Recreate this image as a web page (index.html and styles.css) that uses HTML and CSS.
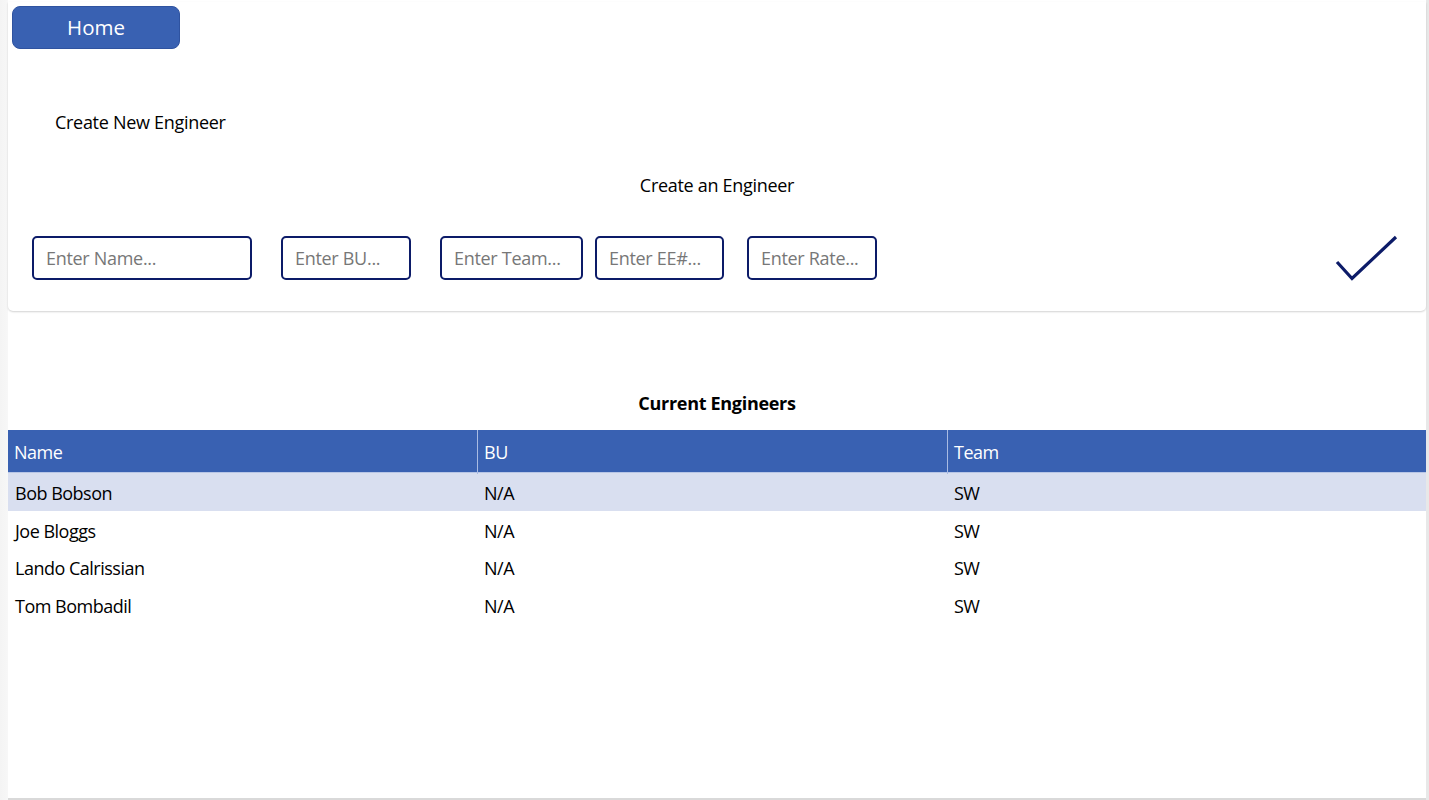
FILE: index.html
```html
<!DOCTYPE html>
<html>
<head>
<meta charset="utf-8">
<link rel="stylesheet" href="styles.css">
</head>
<body>
<div class="canvas">
  <section class="form-card">
    <button class="home-btn">Home</button>
    <div class="page-title">Create New Engineer</div>
    <div class="form-title">Create an Engineer</div>
    <div class="inputs">
      <div class="field f-name">Enter Name...</div>
      <div class="field f-bu">Enter BU...</div>
      <div class="field f-team">Enter Team...</div>
      <div class="field f-ee">Enter EE#...</div>
      <div class="field f-rate">Enter Rate...</div>
      <svg class="check" width="64" height="50" viewBox="0 0 64 50">
        <path d="M2 29 L17 45.5 L61 4" fill="none" stroke="#0c1b68" stroke-width="3.2"/>
      </svg>
    </div>
  </section>
  <div class="list-title">Current Engineers</div>
  <div class="table">
    <div class="thead">
      <div class="th">Name</div>
      <div class="th">BU</div>
      <div class="th">Team</div>
    </div>
    <div class="row selected"><div>Bob Bobson</div><div>N/A</div><div>SW</div></div>
    <div class="row"><div>Joe Bloggs</div><div>N/A</div><div>SW</div></div>
    <div class="row"><div>Lando Calrissian</div><div>N/A</div><div>SW</div></div>
    <div class="row"><div>Tom Bombadil</div><div>N/A</div><div>SW</div></div>
  </div>
</div>
</body>
</html>
```
FILE: styles.css
```css
html, body {
  margin: 0;
  padding: 0;
  height: 800px;
  overflow: hidden;
}
body {
  background: linear-gradient(to right, #f4f4f4 0, #f7f7f7 8px, #fff 8px, #fff 1426px, #e8e8e8 1426px);
  font-family: "Open Sans", "Noto Sans", sans-serif;
  color: #000;
}
.canvas {
  margin: 2px 3px 0 8px;
  height: 798px;
  background: #fff;
  border-bottom: 2px solid #d9d9d9;
  box-sizing: border-box;
}
.form-card {
  height: 309px;
  background: #fff;
  border-radius: 0 0 5px 5px;
  box-shadow: 0 1px 2px rgba(0,0,0,0.18);
  padding-top: 4px;
  box-sizing: border-box;
}
.home-btn {
  display: block;
  margin-left: 4px;
  width: 168px;
  height: 43px;
  background: #3961b2;
  border: 1px solid #2f53a0;
  border-radius: 8px;
  color: #fff;
  font-family: "Open Sans", sans-serif;
  font-size: 20.5px;
  padding: 0;
  padding-bottom: 1px;
}
.page-title {
  margin: 61px 0 0 47px;
  font-size: 18px;
  line-height: 24px;
  letter-spacing: -0.3px;
}
.form-title {
  margin-top: 39px;
  text-align: center;
  font-size: 18px;
  line-height: 24px;
  letter-spacing: -0.3px;
}
.inputs {
  display: flex;
  align-items: center;
  margin-top: 36px;
  padding-left: 24px;
}
.field {
  height: 44px;
  box-sizing: border-box;
  border: 2px solid #0c1b68;
  border-radius: 5px;
  color: #777;
  font-size: 18px;
  letter-spacing: -0.3px;
  line-height: 40px;
  padding-left: 12px;
  white-space: nowrap;
}
.f-name { width: 220px; }
.f-bu { width: 130px; margin-left: 29px; }
.f-team { width: 143px; margin-left: 29px; }
.f-ee { width: 129px; margin-left: 12px; }
.f-rate { width: 130px; margin-left: 23px; }
.check {
  margin-left: auto;
  margin-right: 27px;
  margin-top: 0;
}
.list-title {
  margin-top: 80px;
  text-align: center;
  font-weight: bold;
  font-size: 18px;
  line-height: 24px;
  letter-spacing: -0.3px;
}
.table {
  margin-top: 15px;
}
.thead {
  display: grid;
  grid-template-columns: 469px 470px 1fr;
  height: 43px;
  background: #3961b2;
  border-bottom: 1px solid #b8c6e6;
  box-sizing: border-box;
}
.th {
  color: #fff;
  font-size: 18px;
  letter-spacing: -0.5px;
  line-height: 44px;
  padding-left: 6px;
  border-left: 1px solid #a9bbe3;
}
.th:first-child { border-left: none; padding-left: 6px; }
.row {
  display: grid;
  grid-template-columns: 469px 470px 1fr;
  height: 37.5px;
  font-size: 18px;
  letter-spacing: -0.5px;
  line-height: 40px;
}
.row > div { padding-left: 7px; }
.row.selected { background: #d9dff0; }
```
